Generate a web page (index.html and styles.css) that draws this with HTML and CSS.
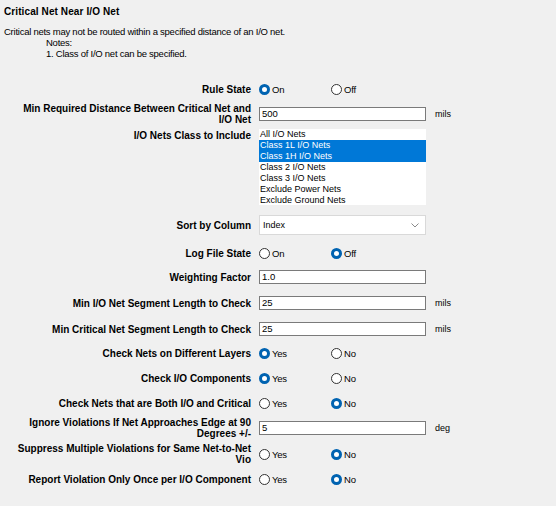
FILE: index.html
```html
<!DOCTYPE html>
<html>
<head>
<meta charset="utf-8">
<link rel="stylesheet" href="styles.css">
</head>
<body>
<div class="page">
  <h1 class="title">Critical Net Near I/O Net</h1>
  <div class="desc">
    <div>Critical nets may not be routed within a specified distance of an I/O net.</div>
    <div class="indent">Notes:</div>
    <div class="indent">1. Class of I/O net can be specified.</div>
  </div>

  <div class="form">
    <div class="row">
      <div class="label">Rule State</div>
      <div class="radios">
        <span class="opt"><span class="radio on"></span>On</span>
        <span class="opt"><span class="radio"></span>Off</span>
      </div>
    </div>

    <div class="row tall g4">
      <div class="label">Min Required Distance Between Critical Net and<br>I/O Net</div>
      <div class="input">500</div>
      <div class="unit">mils</div>
    </div>

    <div class="row listrow g3">
      <div class="label">I/O Nets Class to Include</div>
      <ul class="list">
        <li>All I/O Nets</li>
        <li class="sel">Class 1L I/O Nets</li>
        <li class="sel">Class 1H I/O Nets</li>
        <li>Class 2 I/O Nets</li>
        <li>Class 3 I/O Nets</li>
        <li>Exclude Power Nets</li>
        <li>Exclude Ground Nets</li>
      </ul>
    </div>

    <div class="row selrow g10">
      <div class="label">Sort by Column</div>
      <div class="select">Index
        <svg class="chev" width="8" height="5" viewBox="0 0 8 5"><path d="M0.5 0.5 L4 4 L7.5 0.5" fill="none" stroke="#8a8a8a" stroke-width="1"/></svg>
      </div>
    </div>

    <div class="row g9">
      <div class="label">Log File State</div>
      <div class="radios">
        <span class="opt"><span class="radio"></span>On</span>
        <span class="opt"><span class="radio on"></span>Off</span>
      </div>
    </div>

    <div class="row g6">
      <div class="label">Weighting Factor</div>
      <div class="input">1.0</div>
    </div>

    <div class="row g8">
      <div class="label">Min I/O Net Segment Length to Check</div>
      <div class="input">25</div>
      <div class="unit">mils</div>
    </div>

    <div class="row g8">
      <div class="label">Min Critical Net Segment Length to Check</div>
      <div class="input">25</div>
      <div class="unit">mils</div>
    </div>

    <div class="row g6">
      <div class="label">Check Nets on Different Layers</div>
      <div class="radios">
        <span class="opt"><span class="radio on"></span>Yes</span>
        <span class="opt"><span class="radio"></span>No</span>
      </div>
    </div>

    <div class="row g7">
      <div class="label">Check I/O Components</div>
      <div class="radios">
        <span class="opt"><span class="radio on"></span>Yes</span>
        <span class="opt"><span class="radio"></span>No</span>
      </div>
    </div>

    <div class="row g7">
      <div class="label">Check Nets that are Both I/O and Critical</div>
      <div class="radios">
        <span class="opt"><span class="radio"></span>Yes</span>
        <span class="opt"><span class="radio on"></span>No</span>
      </div>
    </div>

    <div class="row tall g4">
      <div class="label">Ignore Violations If Net Approaches Edge at 90<br>Degrees +/-</div>
      <div class="input">5</div>
      <div class="unit">deg</div>
    </div>

    <div class="row tall g2">
      <div class="label">Suppress Multiple Violations for Same Net-to-Net<br>Vio</div>
      <div class="radios">
        <span class="opt"><span class="radio"></span>Yes</span>
        <span class="opt"><span class="radio on"></span>No</span>
      </div>
    </div>

    <div class="row g4">
      <div class="label">Report Violation Only Once per I/O Component</div>
      <div class="radios">
        <span class="opt"><span class="radio"></span>Yes</span>
        <span class="opt"><span class="radio on"></span>No</span>
      </div>
    </div>
  </div>
</div>
</body>
</html>
```

FILE: styles.css
```css
html, body {
  margin: 0;
  padding: 0;
  background: #f0f0f0;
}
body {
  width: 556px;
  height: 506px;
  overflow: hidden;
  font-family: "Liberation Sans", Arial, sans-serif;
  font-size: 9px;
  color: #000;
}
.page {
  padding: 6px 0 0 4px;
}
.title {
  margin: 0;
  font-size: 10px;
  line-height: 11px;
  font-weight: bold;
  letter-spacing: 0.1px;
}
.desc {
  margin-top: 9px;
  line-height: 11px;
  font-size: 9.5px;
  letter-spacing: -0.25px;
}
.indent {
  padding-left: 42px;
}
.form {
  margin-top: 21px;
  margin-left: -4px;
  display: flex;
  flex-direction: column;
}
.row {
  display: grid;
  grid-template-columns: 251px 167px auto;
  column-gap: 8px;
  align-items: center;
  height: 18px;
}
.row.tall { height: 24px; }
.row.listrow { height: 76px; align-items: start; }
.row.selrow { height: 20px; }
.g2 { margin-top: 2px; }
.g3 { margin-top: 3px; }
.g4 { margin-top: 4px; }
.g6 { margin-top: 6px; }
.g7 { margin-top: 7px; }
.g8 { margin-top: 8px; }
.g9 { margin-top: 9px; }
.g10 { margin-top: 10px; }

.label {
  text-align: right;
  font-weight: bold;
  font-size: 10px;
  line-height: 11px;
  white-space: nowrap;
}
.listrow .label {
  padding-top: 1px;
}
.unit {
  padding-left: 1px;
}
.input {
  height: 14px;
  box-sizing: border-box;
  border: 1px solid #7a7a7a;
  background: #fff;
  padding-left: 2px;
  line-height: 12px;
  font-size: 9.5px;
}
.select {
  position: relative;
  height: 20px;
  box-sizing: border-box;
  border: 1px solid #d9d9d9;
  background: #fff;
  padding-left: 3px;
  line-height: 18px;
}
.chev {
  position: absolute;
  right: 6px;
  top: 7px;
}
.list {
  list-style: none;
  margin: 0;
  padding: 0;
  height: 76px;
  background: #fff;
}
.list li {
  height: 11px;
  line-height: 11px;
  padding-left: 1px;
}
.list li.sel {
  background: #0078d7;
  color: #fff;
}
.radios {
  display: flex;
}
.opt {
  width: 72px;
  display: flex;
  align-items: center;
  line-height: 11px;
  font-size: 9.5px;
  letter-spacing: -0.2px;
}
.radio {
  width: 11px;
  height: 11px;
  box-sizing: border-box;
  border-radius: 50%;
  border: 1px solid #333;
  background: #fff;
  margin-right: 2px;
  flex: none;
}
.radio.on {
  border: 3px solid #0063b1;
  background: #fff;
}
```
